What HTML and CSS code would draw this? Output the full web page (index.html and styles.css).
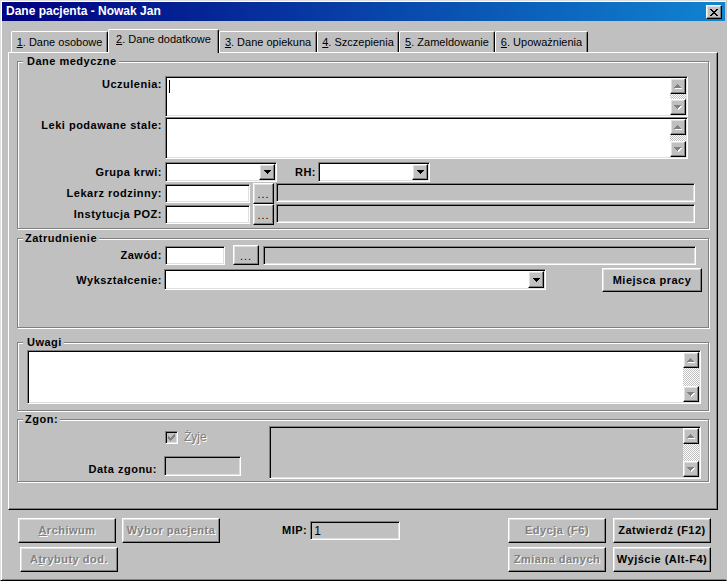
FILE: index.html
```html
<!DOCTYPE html>
<html lang="pl">
<head>
<meta charset="utf-8">
<title>Dane pacjenta - Nowak Jan</title>
<link rel="stylesheet" href="styles.css">
</head>
<body>
<div class="window">
  <div class="titlebar">
    <span class="title">Dane pacjenta - Nowak Jan</span>
    <span class="close raised" aria-label="Zamknij">
      <svg width="8" height="7" viewBox="0 0 8 7"><path fill="#000" d="M0 0h2v1H0zM6 0h2v1H6zM1 1h2v1H1zM5 1h2v1H5zM2 2h4v1H2zM3 3h2v1H3zM2 4h4v1H2zM1 5h2v1H1zM5 5h2v1H5zM0 6h2v1H0zM6 6h2v1H6z"/></svg>
    </span>
  </div>

  <div class="tabs">
    <div class="tab t1"><u>1</u>. Dane osobowe</div>
    <div class="tab t2 active"><u>2</u>. Dane dodatkowe</div>
    <div class="tab t3"><u>3</u>. Dane opiekuna</div>
    <div class="tab t4"><u>4</u>. Szczepienia</div>
    <div class="tab t5"><u>5</u>. Zameldowanie</div>
    <div class="tab t6"><u>6</u>. Upoważnienia</div>
  </div>

  <div class="panel">
    <div class="group g-med">
      <span class="legend lg-wide">Dane medyczne</span>

      <div class="row row-top">
        <span class="lbl lbl-top">Uczulenia:</span>
        <div class="sunken memo m-ucz">
          <span class="caret"></span>
          <div class="vscroll">
            <span class="sbtn raised"><svg width="8" height="5" viewBox="0 0 8 5"><path class="hl" transform="translate(1 1)" d="M3 0h1v1h1v1h1v1h1v1H0V3h1V2h1V1h1z"/><path class="sh" d="M3 0h1v1h1v1h1v1h1v1H0V3h1V2h1V1h1z"/></svg></span>
            <span class="strack"></span>
            <span class="sbtn raised"><svg width="8" height="5" viewBox="0 0 8 5"><path class="hl" transform="translate(1 1)" d="M0 0h7v1H6v1H5v1H4v1H3V3H2V2H1V1H0z"/><path class="sh" d="M0 0h7v1H6v1H5v1H4v1H3V3H2V2H1V1H0z"/></svg></span>
          </div>
        </div>
      </div>

      <div class="row row-top">
        <span class="lbl lbl-top">Leki podawane stale:</span>
        <div class="sunken memo m-leki">
          <span class="spacer"></span>
          <div class="vscroll">
            <span class="sbtn raised"><svg width="8" height="5" viewBox="0 0 8 5"><path class="hl" transform="translate(1 1)" d="M3 0h1v1h1v1h1v1h1v1H0V3h1V2h1V1h1z"/><path class="sh" d="M3 0h1v1h1v1h1v1h1v1H0V3h1V2h1V1h1z"/></svg></span>
            <span class="strack"></span>
            <span class="sbtn raised"><svg width="8" height="5" viewBox="0 0 8 5"><path class="hl" transform="translate(1 1)" d="M0 0h7v1H6v1H5v1H4v1H3V3H2V2H1V1H0z"/><path class="sh" d="M0 0h7v1H6v1H5v1H4v1H3V3H2V2H1V1H0z"/></svg></span>
          </div>
        </div>
      </div>

      <div class="row row-krew">
        <span class="lbl">Grupa krwi:</span>
        <div class="sunken combo c-krew">
          <span class="dd raised"><svg width="7" height="4" viewBox="0 0 7 4"><path fill="#000" d="M0 0h7v1H6v1H5v1H4v1H3V3H2V2H1V1H0z"/></svg></span>
        </div>
        <span class="lbl lbl-rh">RH:</span>
        <div class="sunken combo c-rh">
          <span class="dd raised"><svg width="7" height="4" viewBox="0 0 7 4"><path fill="#000" d="M0 0h7v1H6v1H5v1H4v1H3V3H2V2H1V1H0z"/></svg></span>
        </div>
      </div>

      <div class="row row-pick row-lek">
        <span class="lbl">Lekarz rodzinny:</span>
        <div class="sunken input in-code"></div>
        <span class="raised dots dots-med">...</span>
        <div class="sunken input ro ro-med"></div>
      </div>

      <div class="row row-pick">
        <span class="lbl">Instytucja POZ:</span>
        <div class="sunken input in-code"></div>
        <span class="raised dots dots-med">...</span>
        <div class="sunken input ro ro-med"></div>
      </div>
    </div>

    <div class="group g-job">
      <span class="legend">Zatrudnienie</span>
      <div class="row row-pick row-zawod">
        <span class="lbl">Zawód:</span>
        <div class="sunken input in-zawod"></div>
        <span class="raised dots dots-job">...</span>
        <div class="sunken input ro ro-job"></div>
      </div>
      <div class="row row-wyk">
        <span class="lbl lbl-wyk">Wykształcenie:</span>
        <div class="sunken combo c-wyk">
          <span class="dd raised"><svg width="7" height="4" viewBox="0 0 7 4"><path fill="#000" d="M0 0h7v1H6v1H5v1H4v1H3V3H2V2H1V1H0z"/></svg></span>
        </div>
        <span class="raised btn btn-miejsca">Miejsca pracy</span>
      </div>
    </div>

    <div class="group g-note">
      <span class="legend lg-wide">Uwagi</span>
      <div class="sunken memo m-uwagi">
        <span class="spacer"></span>
        <div class="vscroll">
          <span class="sbtn raised"><svg width="8" height="5" viewBox="0 0 8 5"><path class="hl" transform="translate(1 1)" d="M3 0h1v1h1v1h1v1h1v1H0V3h1V2h1V1h1z"/><path class="sh" d="M3 0h1v1h1v1h1v1h1v1H0V3h1V2h1V1h1z"/></svg></span>
          <span class="strack"></span>
          <span class="sbtn raised"><svg width="8" height="5" viewBox="0 0 8 5"><path class="hl" transform="translate(1 1)" d="M0 0h7v1H6v1H5v1H4v1H3V3H2V2H1V1H0z"/><path class="sh" d="M0 0h7v1H6v1H5v1H4v1H3V3H2V2H1V1H0z"/></svg></span>
        </div>
      </div>
    </div>

    <div class="group g-death">
      <span class="legend">Zgon:</span>
      <div class="death-left">
        <div class="chk-row">
          <span class="chk sunken"><svg width="7" height="7" viewBox="0 0 7 7"><path fill="#808080" d="M6 0h1v1H6zM5 1h2v1H5zM0 2h1v1H0zM4 2h3v1H4zM0 3h2v1H0zM3 3h3v1H3zM0 4h5v1H0zM1 5h3v1H1zM2 6h1v1H2z"/></svg></span>
          <span class="dis-text">Żyje</span>
        </div>
        <div class="row date-row">
          <span class="lbl lbl-date">Data zgonu:</span>
          <div class="sunken input date-field"></div>
        </div>
      </div>
      <div class="sunken memo m-zgon">
        <span class="spacer"></span>
        <div class="vscroll">
          <span class="sbtn raised"><svg width="8" height="5" viewBox="0 0 8 5"><path class="hl" transform="translate(1 1)" d="M3 0h1v1h1v1h1v1h1v1H0V3h1V2h1V1h1z"/><path class="sh" d="M3 0h1v1h1v1h1v1h1v1H0V3h1V2h1V1h1z"/></svg></span>
          <span class="strack"></span>
          <span class="sbtn raised"><svg width="8" height="5" viewBox="0 0 8 5"><path class="hl" transform="translate(1 1)" d="M0 0h7v1H6v1H5v1H4v1H3V3H2V2H1V1H0z"/><path class="sh" d="M0 0h7v1H6v1H5v1H4v1H3V3H2V2H1V1H0z"/></svg></span>
        </div>
      </div>
    </div>
  </div>

  <div class="bottom">
    <div class="brow">
      <span class="raised btn dis"><u>A</u>rchiwum</span>
      <span class="raised btn dis btn-gap">Wybor pacjenta</span>
      <div class="mip">
        <span class="mip-lbl">MIP:</span>
        <div class="sunken input mip-field">1</div>
      </div>
      <div class="right">
        <span class="raised btn dis">Edycja (F6)</span>
        <span class="raised btn">Zatwierdź (F12)</span>
      </div>
    </div>
    <div class="brow brow2">
      <span class="raised btn dis btn-atr">A<u>t</u>rybuty dod.</span>
      <div class="right">
        <span class="raised btn dis">Zmiana danych</span>
        <span class="raised btn">Wyjście (Alt-F4)</span>
      </div>
    </div>
  </div>
</div>
</body>
</html>
```

FILE: styles.css
```css
* { box-sizing: border-box; margin: 0; padding: 0; }
html, body { background: #c0c0c0; }
body {
  width: 727px; height: 581px; overflow: hidden;
  font-family: "Liberation Sans", Arial, sans-serif;
  font-size: 11px; line-height: 13px; color: #000;
}

/* 3D helpers */
.raised {
  background: #c0c0c0;
  border: 1px solid; border-color: #fff #000 #000 #fff;
  box-shadow: inset -1px -1px #808080, inset 1px 1px #dfdfdf;
}
.sunken {
  border: 1px solid; border-color: #808080 #fff #fff #808080;
  box-shadow: inset 1px 1px #000, inset -1px -1px #dfdfdf;
}

.window {
  width: 727px; height: 581px;
  border: 1px solid; border-color: #dfdfdf #c0c0c0 #000 #dfdfdf;
  box-shadow: inset 1px 1px #fff, inset 0 -1px #808080;
  padding: 1px;
  display: flex; flex-direction: column;
}

.titlebar {
  flex: none; height: 19px;
  display: flex; align-items: center; justify-content: space-between;
  padding: 0 3px 0 4px;
  background: linear-gradient(90deg, #000080, #1084d0);
  color: #fff;
}
.title { font-size: 12px; font-weight: bold; line-height: 15px; }
.close {
  width: 16px; height: 14px; margin-top: 1px;
  display: flex; align-items: center; justify-content: center;
}

/* tabs */
.tabs {
  flex: none; height: 31px;
  display: flex; align-items: flex-end;
  padding: 8px 0 0 9px;
}
.tab {
  height: 21px; padding-top: 4px;
  border-top: 1px solid #fff; border-left: 1px solid #fff; border-right: 1px solid #000;
  box-shadow: inset -1px 0 #808080;
  border-radius: 2px 2px 0 0;
  text-align: center; white-space: nowrap;
  background: #c0c0c0;
}
.tab.active {
  height: 24px; padding-top: 3px; margin-bottom: -1px;
  position: relative; z-index: 1;
}
.t1 { width: 97px; }
.t2 { width: 111px; }
.t3 { width: 98px; }
.t4 { width: 82px; }
.t5 { width: 96px; }
.t6 { width: 93px; }

/* panel */
.panel {
  flex: none; margin-left: 6px; width: 710px; height: 458px;
  border: 1px solid; border-color: #fff #000 #000 #fff;
  box-shadow: inset -1px -1px #808080;
  padding: 8px 0 0 8px;
}

.group {
  position: relative; width: 692px;
  border: 1px solid #808080;
  box-shadow: inset 1px 1px #fff, 1px 1px #fff;
}
.legend {
  position: absolute; top: -7px; left: 5px;
  padding: 0 2px; background: #c0c0c0;
  font-weight: bold; letter-spacing: .5px; white-space: nowrap;
}
.legend.lg-wide { padding-left: 4px; }

.g-med { height: 168px; padding-top: 14px; }
.g-job { height: 90px; margin-top: 9px; padding-top: 7px; }
.g-note { height: 69px; margin-top: 14px; padding: 7px 0 0 9px; }
.g-death { height: 63px; margin-top: 8px; display: flex; align-items: flex-start; }

.row { display: flex; align-items: center; }
.row-top { align-items: flex-start; }
.lbl {
  flex: none; width: 144px; margin-right: 3px;
  text-align: right; font-weight: bold; letter-spacing: .5px; white-space: nowrap;
}
.lbl-top { padding-top: 2px; }

/* memo fields */
.memo {
  display: flex; justify-content: space-between;
  padding: 1px; background: #fff; flex: none;
}
.m-ucz { width: 523px; height: 41px; }
.m-leki { width: 523px; height: 42px; }
.m-uwagi { width: 674px; height: 54px; }
.m-zgon { width: 432px; height: 53px; margin-top: 6px; background: #c0c0c0; }
.caret { width: 1px; height: 13px; background: #000; margin: 2px 0 0 2px; }
.vscroll { width: 16px; display: flex; flex-direction: column; }
.sbtn {
  width: 16px; height: 16px; flex: none;
  display: flex; align-items: center; justify-content: center;
}
.sbtn .hl { fill: #fff; }
.sbtn .sh { fill: #808080; }
.strack {
  flex: 1;
  background-color: #fff;
  background-image: conic-gradient(#c0c0c0 25%, #fff 0 50%, #c0c0c0 0 75%, #fff 0);
  background-size: 2px 2px;
}

/* combos */
.combo {
  flex: none; height: 20px; padding: 1px; background: #fff;
  display: flex; justify-content: flex-end;
}
.dd { width: 16px; height: 100%; display: flex; align-items: center; justify-content: center; }
.row-krew { margin-top: 3px; }
.c-krew { width: 112px; }
.lbl-rh { width: 22px; margin-left: 17px; margin-right: 2px; }
.c-rh { width: 112px; }
.c-wyk { width: 382px; height: 21px; }

/* single-line inputs */
.input { flex: none; height: 19px; background: #fff; }
.input.ro { background: #c0c0c0; }
.row-pick { align-items: flex-start; height: 21px; }
.row-pick .lbl { align-self: center; }
.row-lek { margin-top: 1px; }
.in-code { width: 85px; margin-top: 1px; }
.dots {
  flex: none; display: flex; align-items: center; justify-content: center;
  padding-top: 2px; font-size: 11px; letter-spacing: 1px;
}
.dots-med { width: 21px; height: 21px; margin-left: 3px; }
.ro-med { width: 419px; margin-left: 2px; }

.row-zawod { height: 19px; }
.in-zawod { width: 60px; }
.dots-job { width: 26px; height: 20px; margin-left: 8px; margin-top: -1px; }
.ro-job { width: 433px; margin-left: 4px; }
.row-wyk { margin-top: 4px; align-items: flex-start; }
.row-wyk .lbl { align-self: center; }
.lbl-wyk { margin-right: 2px; }

.btn {
  flex: none; width: 98px; height: 25px;
  display: flex; align-items: center; justify-content: center;
  font-weight: bold; letter-spacing: .5px; white-space: nowrap;
}
.btn.dis { color: #808080; text-shadow: 1px 1px 0 #fff; }
.btn-miejsca { width: 100px; height: 24px; margin-left: 56px; margin-top: -1px; }

/* zgon */
.death-left { flex: none; width: 251px; padding-top: 11px; }
.chk-row { display: flex; align-items: center; height: 13px; padding-left: 147px; }
.chk {
  flex: none; width: 13px; height: 13px; background: #c0c0c0;
  display: flex; align-items: center; justify-content: center;
}
.dis-text { margin-left: 6px; font-size: 12px; color: #808080; text-shadow: 1px 1px 0 #fff; }
.date-row { margin-top: 12px; align-items: flex-end; }
.lbl-date { width: 139px; margin-right: 7px; }
.date-field { width: 77px; height: 20px; background: #c0c0c0; }

/* bottom buttons */
.bottom { flex: none; padding: 8px 14px 0 16px; }
.brow { display: flex; align-items: center; height: 25px; }
.brow2 { margin-top: 4px; }
.btn-gap { margin-left: 6px; }
.btn-atr { margin-left: 2px; }
.mip { display: flex; align-items: center; margin-left: 62px; }
.mip-lbl { font-weight: bold; letter-spacing: .5px; margin-right: 3px; }
.mip-field { width: 90px; background: #c0c0c0; padding: 2px 3px; font-size: 12px; line-height: 14px; }
.right { margin-left: auto; display: flex; gap: 7px; }
```
